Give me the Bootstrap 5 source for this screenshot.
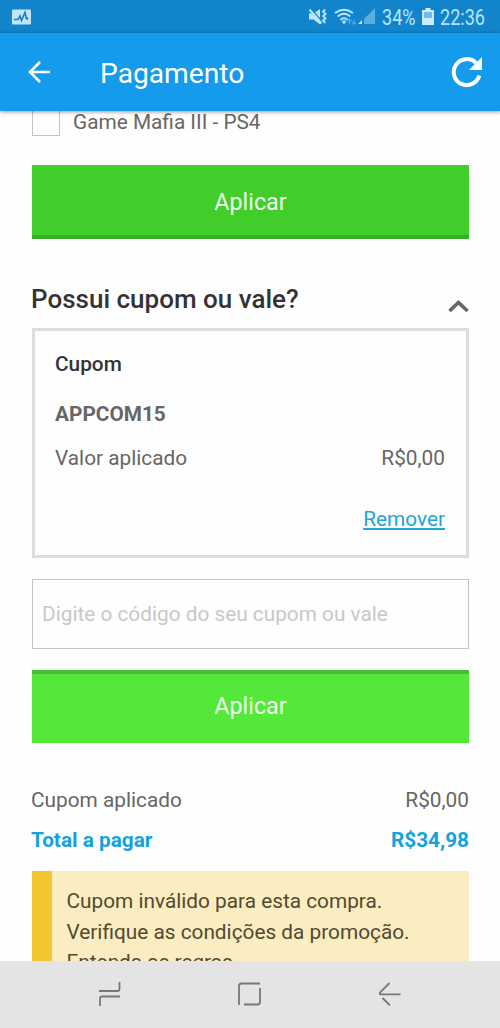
<!DOCTYPE html>
<html lang="pt-BR">
<head>
<meta charset="utf-8">
<meta name="viewport" content="width=device-width, initial-scale=1">
<title>Pagamento</title>
<link href="https://cdn.jsdelivr.net/npm/bootstrap@5.3.0/dist/css/bootstrap.min.css" rel="stylesheet">
<style>
body{font-family:Roboto,"Liberation Sans",sans-serif;font-size:20.8px;line-height:30px;color:#666;background:#fefefe}
.status-bar{height:33px;background:#1284cb;color:#b9e5fa;padding:0 13px 0 12px}
.narrow-text{display:block;white-space:nowrap;line-height:33px;font-size:21.500px;margin-left:6px;padding-top:1px}
.narrow-text span{display:inline-block;transform-origin:0 50%;transform:scaleX(.84)}
.w-pct{width:34px}.w-clock{width:47px}
.icon-wifi{margin-left:6px}.icon-signal{margin-left:1px}.icon-battery{margin-left:6px}
.app-bar{height:78px;background:#159bec;color:#fff;padding:0 16px 0 26px;box-shadow:0 1px 4px rgba(0,0,0,.4);z-index:2}
.app-title{font-size:28.200px;margin-left:48px;font-weight:400;line-height:30px;padding-top:3px}
main{padding:0 31px 0 32px;min-height:0}
.option-row{margin-top:-5px;height:31px}
.check-box{width:28px;height:28px;border:1px solid #c4c4c4;margin-right:13px}
.btn-apply{height:74px;border-radius:0;border:0;background:#41cd2a;border-bottom:4px solid #35ad24;color:#efffe9;font-size:23.3px;padding:5px 0 0}
.btn-apply.is-pressed{height:73px;background:#54e83a;border-bottom:0;border-top:4px solid #49bb35;padding:0 0 5px}
.btn-gift{margin-top:28px}
.coupon-head{margin-top:45px;height:44px}
.section-title{font-size:26px;font-weight:500;color:#333;line-height:30px;margin-left:-1px}
.chevron{margin-top:15px}
.coupon-box{height:230px;border:3px solid #dcdcdc;border-radius:0;background:#fefefe;padding:18px 21px 0 20px;color:#666}
.coupon-name{font-weight:500;color:#333}
.coupon-code{margin-top:20px}
.coupon-value{margin-top:14px}
.coupon-remove{margin-top:31px}
.link-remove{color:#23a6d5;text-decoration-thickness:1.500px;text-underline-offset:2px}
.code-input{height:70px;border:1.500px solid #c4c4c4;border-radius:0;margin:21px 0;padding:0 9px;font-size:20.8px;background:#fefefe}
.code-input::placeholder{color:#c8c8c8}
.sum-row{margin-top:42px}
.total-row{margin-top:10px;color:#12a3dc;font-weight:700}
.sum-row span:first-child,.total-row span:first-child{margin-left:-1px}
.alert-coupon{margin-top:16px;background:#faedc1;border:0;border-left:20px solid #f1c631;border-radius:0;color:#54492f;padding:15px 15px 0 14.500px;height:150px;line-height:30.5px}
.nav-keys{height:67px;background:#e4e4e4;z-index:2;padding:0 99px 2px 98px}
.key-home{margin-left:-3px}
</style>
</head>
<body class="vh-100 d-flex flex-column overflow-hidden">
<div class="status-bar d-flex align-items-center flex-shrink-0">
  <svg width="19" height="16" viewBox="0 0 19 16"><rect width="19" height="15" y=".5" rx="1" fill="#c3e4f6"/><path d="M2 10.500h4L8 7l1.500 4.500L13 3.500 14.500 9.500" fill="none" stroke="#1a7fbd" stroke-width="1.600"/><circle cx="15" cy="9.500" r="1.300" fill="#1a7fbd"/></svg>
  <svg class="ms-auto" width="20" height="18" viewBox="0 0 20 18"><path d="M1 5.500h4.500l6.500-4.500v15.500l-6.500-5H1z" fill="#b9e5fa"/><path d="M3.500 1l10 12" stroke="#1284cb" stroke-width="1.200"/><path d="M1.500 1.500l12 14" stroke="#b9e5fa" stroke-width="2"/><path d="M17 1.500l-1.800 2.200 2.300 2.200-2.300 2.200 2.300 2.200-2.300 2.200 2 2.500" fill="none" stroke="#b9e5fa" stroke-width="2"/></svg>
  <svg class="icon-wifi" width="23" height="18" viewBox="0 0 23 18"><g fill="none" stroke="#b9e5fa" stroke-width="1.800"><path d="M1 5Q10-1.500 19 5M3.700 8.500Q10 3 16.300 8.500M6.400 12Q10 8.500 13.600 12"/></g><circle cx="10" cy="14" r="1.800" fill="#b9e5fa"/><path d="M15.500 16.500v-5m-2 2 2-2.300 2 2.300M20 11v5m-2-2 2 2.300 2-2.300" fill="none" stroke="#52aee3" stroke-width="1.100"/></svg>
  <svg class="icon-signal" width="18" height="17" viewBox="0 0 18 17"><path d="M17 0v16H6V11z" fill="#5bafe0"/><path d="M0 16l4-4v4z" fill="#b9e5fa"/></svg>
  <div class="narrow-text w-pct"><span>34%</span></div>
  <svg class="icon-battery" width="12" height="17" viewBox="0 0 12 17"><path d="M3.500 0h5v2H12v15H0V2h3.500z" fill="#c9edfc"/><rect x="2" y="4" width="8" height="6" fill="#70bce8"/></svg>
  <div class="narrow-text w-clock"><span>22:36</span></div>
</div>
<header class="app-bar d-flex align-items-center flex-shrink-0 position-relative">
  <svg width="26" height="26" viewBox="0 0 26 26" fill="none" stroke="#fff" stroke-width="2.600"><path d="M24 13H4M14 3 4 13l10 10"/></svg>
  <h1 class="app-title mb-0">Pagamento</h1>
  <svg class="ms-auto" width="33" height="32" viewBox="0 0 33 32"><path d="M28.300 19.500A13 13 0 1 1 25 7" fill="none" stroke="#fff" stroke-width="4"/><path d="M31 1v13H18z" fill="#fff"/></svg>
</header>
<main class="flex-grow-1 overflow-hidden">
  <div class="option-row d-flex align-items-center"><span class="check-box"></span><span>Game Mafia III - PS4</span></div>
  <button type="button" class="btn btn-apply btn-gift w-100 d-block">Aplicar</button>
  <div class="coupon-head d-flex justify-content-between">
    <h2 class="section-title mb-0">Possui cupom ou vale?</h2>
    <svg class="chevron" width="22" height="14" viewBox="0 0 22 14"><path d="M2.500 12l9-8.500 9 8.500" fill="none" stroke="#666" stroke-width="3.600"/></svg>
  </div>
  <section class="card coupon-box">
    <div class="coupon-name">Cupom</div>
    <div class="coupon-code fw-bold">APPCOM15</div>
    <div class="coupon-value d-flex justify-content-between"><span>Valor aplicado</span><span>R$0,00</span></div>
    <div class="coupon-remove text-end"><a href="#" class="link-remove">Remover</a></div>
  </section>
  <input class="form-control code-input" type="text" placeholder="Digite o código do seu cupom ou vale">
  <button type="button" class="btn btn-apply is-pressed w-100 d-block">Aplicar</button>
  <div class="sum-row d-flex justify-content-between"><span>Cupom aplicado</span><span>R$0,00</span></div>
  <div class="total-row d-flex justify-content-between"><span>Total a pagar</span><span>R$34,98</span></div>
  <div class="alert alert-coupon mb-0" role="alert">Cupom inválido para esta compra.<br>Verifique as condições da promoção.<br>Entenda as regras.</div>
</main>
<nav class="nav-keys d-flex align-items-center justify-content-between flex-shrink-0">
  <svg width="24" height="26" viewBox="0 0 24 26" fill="none" stroke="#777" stroke-width="1.800"><path d="M21.500 1v7q0 2-2 2H1M22 15.500H4q-2 0-2 2V25"/></svg>
  <svg class="key-home" width="24" height="24" viewBox="0 0 24 24" fill="none" stroke="#777" stroke-width="1.800"><path d="M2 23V4q0-2.500 2.500-2.500H23M23 6v14q0 2.500-2.500 2.500H7"/></svg>
  <svg width="22" height="24" viewBox="0 0 22 24" fill="none" stroke="#777" stroke-width="1.800"><path d="M10.500 1 1 10.500q-1 1.500 1 1.800H21.500M3.500 16 11 23.500"/></svg>
</nav>
<script src="https://cdn.jsdelivr.net/npm/bootstrap@5.3.0/dist/js/bootstrap.bundle.min.js"></script>
</body>
</html>
